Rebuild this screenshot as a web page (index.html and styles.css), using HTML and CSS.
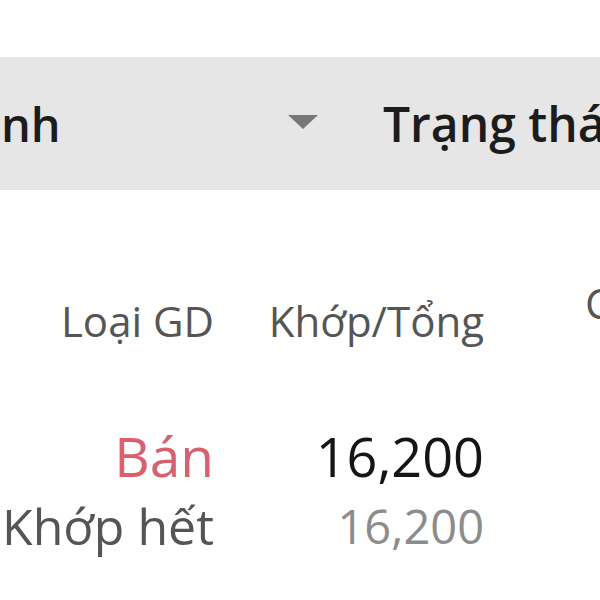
FILE: index.html
```html
<!DOCTYPE html>
<html lang="vi">
<head>
<meta charset="utf-8">
<link rel="stylesheet" href="styles.css">
</head>
<body>
<div class="page">
  <div class="filter-bar">
    <span class="filter-left">nh</span>
    <svg class="caret" width="30" height="14" viewBox="0 0 30 14"><path d="M0 0 H30 L15 14 Z" fill="#777"/></svg>
    <span class="filter-right">Trạng thái</span>
  </div>
  <div class="table">
    <div class="head-row">
      <div class="col c1">Loại GD</div>
      <div class="col c2">Khớp/Tổng</div>
      <div class="col c3">Còn lại</div>
    </div>
    <div class="row">
      <div class="cell c1">
        <div class="sell">Bán</div>
        <div class="sub">Khớp hết</div>
      </div>
      <div class="cell c2">
        <div class="main">16,200</div>
        <div class="sub light">16,200</div>
      </div>
    </div>
  </div>
</div>
</body>
</html>
```

FILE: styles.css
```css
html, body {
  margin: 0;
  padding: 0;
  background: #ffffff;
  width: 600px;
  height: 600px;
  overflow: hidden;
}
.page {
  font-family: "Open Sans", "Noto Sans", sans-serif;
  padding-top: 57px;
  white-space: nowrap;
}
.filter-bar {
  height: 133px;
  background: #e6e6e6;
  display: flex;
  align-items: center;
  overflow: hidden;
}
.filter-left {
  font-size: 47px;
  font-weight: 600;
  color: #1c1c1c;
  margin-left: 1px;
  width: 287px;
  flex-shrink: 0;
}
.caret {
  margin-top: -4px;
  flex-shrink: 0;
}
.filter-right {
  margin-left: 65px;
  font-size: 48px;
  font-weight: 600;
  color: #1c1c1c;
}
.table {
  padding-top: 90px;
}
.head-row {
  display: flex;
  align-items: center;
  height: 80px;
}
.col {
  font-size: 42px;
  color: #555555;
  flex-shrink: 0;
}
.c1 {
  width: 214px;
  text-align: right;
  flex-shrink: 0;
}
.c2 {
  width: 270px;
  text-align: right;
  flex-shrink: 0;
}
.c3 {
  margin-left: 101px;
  margin-top: -36px;
}
.row {
  display: flex;
  padding-top: 61px;
}
.cell {
  display: flex;
  flex-direction: column;
}
.sell {
  font-size: 55px;
  color: #d9616f;
  line-height: 70px;
}
.main {
  font-size: 54px;
  color: #151515;
  line-height: 70px;
}
.sub {
  font-size: 50px;
  color: #555555;
  line-height: 70px;
}
.sub.light {
  font-size: 47px;
  color: #8c8c8c;
}
```
